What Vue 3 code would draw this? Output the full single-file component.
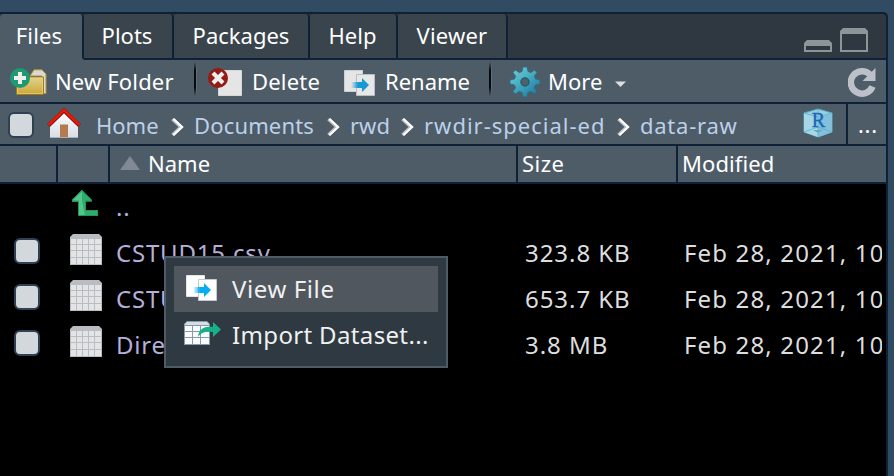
<script setup>
const tabs = [
  { label: 'Files', key: 'files' },
  { label: 'Plots', key: 'plots' },
  { label: 'Packages', key: 'packages' },
  { label: 'Help', key: 'help' },
  { label: 'Viewer', key: 'viewer' },
]
const crumbs = [
  { label: 'Home', key: 'home' },
  { label: 'Documents', key: 'documents' },
  { label: 'rwd', key: 'rwd' },
  { label: 'rwdir-special-ed', key: 'special' },
  { label: 'data-raw', key: 'raw' },
]
const files = [
  { id: 1, name: 'CSTUD15.csv', size: '323.8 KB', modified: 'Feb 28, 2021, 10' },
  { id: 2, name: 'CSTU', size: '653.7 KB', modified: 'Feb 28, 2021, 10' },
  { id: 3, name: 'Dire', size: '3.8 MB', modified: 'Feb 28, 2021, 10' },
]
</script>

<template>
  <div class="window">
    <section class="pane">
      <nav class="tabs">
        <div v-for="(t, i) in tabs" :key="t.key" class="tab" :class="[t.key, { active: i === 0 }]"><span>{{ t.label }}</span></div>
        <div class="pane-controls">
          <svg width="28" height="12" viewBox="0 0 28 12"><path fill="#8b9698" fill-rule="evenodd" d="M3 0h22l3 3v9H0V3zM2 6v4h24V6z" /></svg>
          <svg width="28" height="24" viewBox="0 0 28 24"><path fill="#8b9698" fill-rule="evenodd" d="M3 0h22l3 3v21H0V3zM2 6v16h24V6z" /></svg>
        </div>
      </nav>

      <div class="toolbar">
        <div class="tool new-folder">
          <svg width="38" height="28" viewBox="0 0 38 28">
            <defs>
              <linearGradient id="gold" x2="0" y2="1"><stop stop-color="#dfd48f" /><stop offset="1" stop-color="#cfa634" /></linearGradient>
            </defs>
            <path d="M20 8 24 1.800h8L36 6v19.500h-4V8z" fill="#d8d8d6" stroke="#b5922f" />
            <path d="M6.500 9h27v17.500h-27z" fill="url(#gold)" stroke="#a47917" />
            <path d="M7.500 10h25v15.500h-25z" fill="none" stroke="#e9d78c" stroke-opacity=".6" />
            <circle cx="10" cy="10" r="10" fill="#1d9a72" />
            <path d="M8 4h4v4h4v4h-4v4H8v-4H4V8h4z" fill="#eeeeec" />
          </svg>
          <span>New Folder</span>
        </div>
        <i class="divider"></i>
        <div class="tool delete">
          <svg width="35" height="28" viewBox="0 0 35 28">
            <path d="M10.500 2.500h23v25h-23z" fill="#e5e5e6" stroke="#d6d8da" />
            <circle cx="10" cy="10" r="10" fill="#951a14" />
            <path d="m5 5 10 10M15 5 5 15" stroke="#eee" stroke-width="4.200" />
          </svg>
          <span>Delete</span>
        </div>
        <div class="tool rename">
          <svg width="32" height="26" viewBox="0 0 32 26">
            <defs><linearGradient id="fade"><stop stop-color="#169ad5" stop-opacity="0" /><stop offset=".4" stop-color="#169ad5" /></linearGradient></defs>
            <path d="M.5.5h18v21H.5z" fill="#e5e5e5" stroke="#cdd0d2" />
            <path d="M12.500 4.500h18v21h-18z" fill="#e7e7e7" stroke="#b9bdc1" />
            <path d="M7 12h11V8l7 7-7 7v-4H7z" fill="url(#fade)" />
          </svg>
          <span>Rename</span>
        </div>
        <i class="divider"></i>
        <div class="tool more">
          <svg width="32" height="32" viewBox="-16 -16 32 32">
            <defs><linearGradient id="gear" x2=".8" y2="1"><stop stop-color="#79cdd9" /><stop offset=".45" stop-color="#4bb0c5" /><stop offset="1" stop-color="#1d789f" /></linearGradient></defs>
            <path fill="url(#gear)" stroke="#286c83" stroke-width=".8" stroke-linejoin="round" d="M-2-15H2L3-10.500 5.800-9.400 9.500-12 12-9.500 9.400-5.800 10.500-3 15-2V2L10.500 3 9.400 5.800 12 9.500 9.500 12 5.800 9.400 3 10.500 2 15H-2L-3 10.500-5.800 9.400-9.500 12-12 9.500-9.400 5.800-10.500 3-15 2V-2L-10.500-3-9.400-5.800-12-9.500-9.500-12-5.800-9.400-3-10.500z" />
            <circle r="4" fill="#50616c" stroke="#245e70" stroke-width="1.500" />
          </svg>
          <span>More</span>
          <svg class="caret" width="11" height="6" viewBox="0 0 11 6"><path d="M0 .5h11L5.500 6z" fill="#dcddde" /></svg>
        </div>
        <svg class="refresh" width="28" height="30" viewBox="0 0 28 30">
          <path d="M24.500 19.500A11.200 11.200 0 1 1 22 7.500" fill="none" stroke="#bcc0c9" stroke-width="6.500" />
          <path d="M27.500 1v13H14.500z" fill="#bcc0c9" />
        </svg>
      </div>

      <div class="path-bar">
        <i class="checkbox"></i>
        <svg class="home-icon" width="34" height="31" viewBox="0 0 34 31">
          <defs><linearGradient id="wall" x2="0" y2="1"><stop stop-color="#fff" /><stop offset="1" stop-color="#d7dde4" /></linearGradient></defs>
          <path d="M3 16 17 3l14 13v14H3z" fill="url(#wall)" />
          <path d="M3 29.500h28" stroke="#a9b0b8" />
          <path d="M13 16.500h8V29h-8z" fill="#b37b4e" />
          <path d="m1.500 17.500 15.500-15 15.500 15" fill="none" stroke="#841309" stroke-width="4" />
          <path d="m1.500 17 15.500-15 15.500 15" fill="none" stroke="#e81b08" stroke-width="2.600" />
        </svg>
        <template v-for="(c, i) in crumbs" :key="c.key">
          <svg v-if="i" class="chevron" width="13" height="18" viewBox="0 0 13 18"><path d="m1.500 1 8.500 8-8.500 8" fill="none" stroke="#b9bdc2" stroke-width="3.600" /><path d="m2.500 1 8.500 8-8.500 8" fill="none" stroke="#fff" stroke-width="2.200" /></svg>
          <span class="crumb" :class="c.key">{{ c.label }}</span>
        </template>
        <svg class="project" width="30" height="30" viewBox="0 0 30 30">
          <path d="m15 1 14 4v19l-14 5L1 24V5z" fill="#9bcee2" stroke="#55b1c3" />
          <path d="m1 5 14 5v19L1 24z" fill="#a5d7e8" />
          <path d="m29 5-14 5v19l14-5z" fill="#82c0dc" />
          <path d="m1 5 14 4 14-4M15 9v20M1 24l14-5 14 5M15 1v8" fill="none" stroke="#58b3c5" stroke-width=".8" />
          <path d="m10 22 5 3 5-3z" fill="#66aac0" />
          <text x="15.500" y="19" text-anchor="middle" font-family="Liberation Serif, serif" font-size="20" fill="#2165b4" stroke="#2165b4" stroke-width=".4">R</text>
        </svg>
        <div class="ellipsis">...</div>
      </div>

      <div class="grid-row head">
        <div></div><div></div>
        <div class="name-head"><svg width="20" height="14" viewBox="0 0 20 14"><path d="m10 0 10 14H0z" fill="#818897" /></svg><span class="h-name">Name</span></div>
        <div class="h-size">Size</div>
        <div class="h-mod">Modified</div>
      </div>
      <div class="grid-row item">
        <div></div>
        <div class="icon-cell up">
          <svg width="26" height="26" viewBox="0 0 26 26"><path d="M10 0 20 10v1.500h-6.500v8.500H26v6H6.500V11.500H0V10z" fill="#2fad6b" /><path d="M10 0v11L13 25.500H6.500V11.500H0V10z" fill="#52c68a" /><path d="M10 .7 19.500 10v1h-6v9.500h12v5H6.500V11H.5v-1z" fill="none" stroke="#23945a" /></svg>
        </div>
        <div class="name">..</div><div></div><div></div>
      </div>
      <div v-for="f in files" :key="f.id" class="grid-row item">
        <div><i class="checkbox"></i></div>
        <div class="icon-cell">
          <svg width="32" height="31" viewBox="0 0 32 31">
            <path d="M0 31V3l3-3h26l3 3v28z" fill="#b9bdc2" />
            <path d="M1 5h5v5H1zM7 5h5v5H7zM13 5h5v5h-5zM19 5h5v5h-5zM25 5h6v5h-6zM1 11h5v5H1zM7 11h5v5H7zM13 11h5v5h-5zM19 11h5v5h-5zM25 11h6v5h-6zM1 17h5v6H1zM7 17h5v6H7zM13 17h5v6h-5zM19 17h5v6h-5zM25 17h6v6h-6zM1 24h5v6H1zM7 24h5v6H7zM13 24h5v6h-5zM19 24h5v6h-5zM25 24h6v6h-6z" fill="#e3e4e6" />
          </svg>
        </div>
        <div class="name">{{ f.name }}</div>
        <div class="size">{{ f.size }}</div>
        <div class="modified">{{ f.modified }}</div>
      </div>
    </section>

    <div class="menu">
      <div class="menu-item selected">
        <svg width="32" height="26" viewBox="0 0 32 26">
          <defs><linearGradient id="fade-menu"><stop stop-color="#05adf2" stop-opacity="0" /><stop offset=".4" stop-color="#05adf2" /></linearGradient></defs>
          <path d="M.5.5h18v21H.5z" fill="#fff" stroke="#e3e5e7" />
          <path d="M12.500 4.500h18v21h-18z" fill="#fff" stroke="#c5cacf" />
          <path d="M7 12h11V8l7 7-7 7v-4H7z" fill="url(#fade-menu)" />
        </svg>
        <span class="m-view">View File</span>
      </div>
      <div class="menu-item import">
        <svg width="37" height="24" viewBox="0 0 37 24">
          <path d="M0 24V3l3-3h20l3 3v21z" fill="#8799ab" />
          <path d="M1 3 3 1h20l2 2v1H1z" fill="#d5dde6" />
          <path d="M1 5h7v5H1zM9 5h7v5H9zM17 5h8v5h-8zM1 11h7v5H1zM9 11h7v5H9zM17 11h8v5h-8zM1 17h7v6H1zM9 17h7v6H9zM17 17h8v6h-8z" fill="#fbfcfd" />
          <path d="M14 16C15 7 21 5 29 6V1l8 7.500-8 7.500v-5c-7-1-12 0-15 5z" fill="#17b188" />
        </svg>
        <span class="m-import">Import Dataset...</span>
      </div>
    </div>
  </div>
</template>

<style>
body { margin: 0; overflow: hidden; }
</style>

<style scoped>
* { box-sizing: border-box; }
svg { display: block; flex: none; }
.window {
  position: relative; width: 894px; height: 476px; padding-top: 12px; overflow: hidden;
  background: #304b62; color: #fff; font: 22px/28px "Noto Sans", "Open Sans", sans-serif; white-space: nowrap;
}
.pane {
  width: 888px; height: 464px; background: #000; overflow: hidden;
  border-top: 2px solid #0f2136; border-right: 2px solid #0f2136; border-top-right-radius: 5px;
}
.tabs { display: flex; height: 46px; background: #2f3840; }
.tab {
  height: 46px; padding-top: 7px; background: #3a444d; border-right: 2px solid #0f2136; border-bottom: 2px solid #0f2136;
  border-radius: 4px 4px 0 0; text-align: center; flex: none;
}
.tab.active { background: #4e5c68; border-bottom-color: #4e5c68; }
.files { width: 84px; padding-right: 4px; letter-spacing: .2px; }
.plots { width: 90px; padding-right: 2px; }
.packages { width: 136px; }
.help { width: 88px; padding-right: 1px; }
.viewer { width: 110px; letter-spacing: .2px; }
.pane-controls { flex: 1; display: flex; align-items: flex-end; justify-content: flex-end; gap: 8px; padding: 0 18px 6px 0; border-bottom: 2px solid #0f2136; }
.toolbar { display: flex; height: 44px; background: #4e5c68; border-bottom: 2px solid #0f2136; }
.tool { display: flex; padding-top: 8px; flex: none; }
.tool span { margin-top: -1px; }
.new-folder { width: 194px; padding-left: 10px; letter-spacing: .15px; }
.new-folder span { margin-left: 7px; }
.divider {
  width: 4px; height: 34px; margin-top: 2px; flex: none;
  background: linear-gradient(90deg, #07090c 0 2px, #5f6d78 2px 3px, transparent 3px);
  -webkit-mask: linear-gradient(transparent, #000 25% 75%, transparent);
  mask: linear-gradient(transparent, #000 25% 75%, transparent);
}
.delete { width: 146px; padding-left: 10px; letter-spacing: .2px; }
.delete span { margin-left: 9px; }
.rename { width: 145px; }
.rename svg { margin-top: 2px; }
.rename span { margin-left: 9px; }
.more { padding-left: 16px; }
.more svg { margin-top: -2px; }
.more span { margin-left: 7px; }
.more .caret { margin: 13px 0 0 13px; }
.refresh { margin: 7px 10px 0 auto; }
.path-bar { display: flex; height: 42px; background: #4e5c68; border-bottom: 2px solid #0f2136; }
.checkbox { display: block; width: 26px; height: 26px; border: 2px solid #2e4052; border-radius: 6px; background: #d3d8dc; flex: none; }
.path-bar .checkbox { margin: 8px 0 0 8px; }
.home-icon { margin: 4px 0 0 13px; }
.crumb { color: #bcd0e9; padding-top: 7px; flex: none; }
.home { margin-left: 15px; width: 75px; }
.chevron { margin-top: 14px; }
.documents { margin-left: 10px; width: 133px; letter-spacing: .15px; }
.rwd { margin-left: 10px; width: 51px; }
.special { margin-left: 10px; width: 193px; letter-spacing: 1px; }
.raw { margin-left: 10px; letter-spacing: .75px; }
.project { margin: 4px 13px 0 auto; }
.ellipsis { width: 40px; border-left: 2px solid #0f2136; padding: 6px 0 0 10px; letter-spacing: .7px; }
.grid-row { display: grid; grid-template-columns: 58px 52px 408px 160px 208px; }
.head { height: 38px; background: #4e5c68; border-bottom: 2px solid #0f2136; }
.head > div { border-right: 2px solid #0f2136; padding-top: 3px; }
.head > div:last-child { border-right: 0; }
.head > .name-head { display: flex; padding-left: 10px; }
.name-head svg { margin-top: 7px; }
.h-name { margin-left: 8px; }
.h-size { padding-left: 4px; letter-spacing: .5px; }
.h-mod { padding-left: 4px; letter-spacing: .1px; }
.item { height: 46px; font-size: 24px; color: #dedede; }
.item .checkbox { margin: 8px 0 0 14px; }
.icon-cell { padding: 4px 0 0 12px; }
.icon-cell.up { padding: 6px 0 0 14px; }
.name { padding: 9px 0 0 6px; color: #b5afd9; letter-spacing: .8px; }
.size { padding: 9px 0 0 7px; letter-spacing: .95px; }
.modified { padding: 9px 0 0 6px; width: 204px; overflow: hidden; letter-spacing: 1.15px; }
.menu { position: absolute; left: 164px; top: 256px; width: 284px; height: 112px; background: #2f3941; border: 2px solid #4d5c67; padding: 8px; font-size: 24px; color: #f0f0f0; }
.menu-item { display: flex; height: 46px; padding: 9px 0 0 12px; }
.selected { background: #50575f; }
.menu-item span { margin-left: 14px; }
.m-view { letter-spacing: .6px; }
.m-import { letter-spacing: .35px; }
.import { padding-left: 10px; }
.import span { margin-left: 11px; }
</style>
